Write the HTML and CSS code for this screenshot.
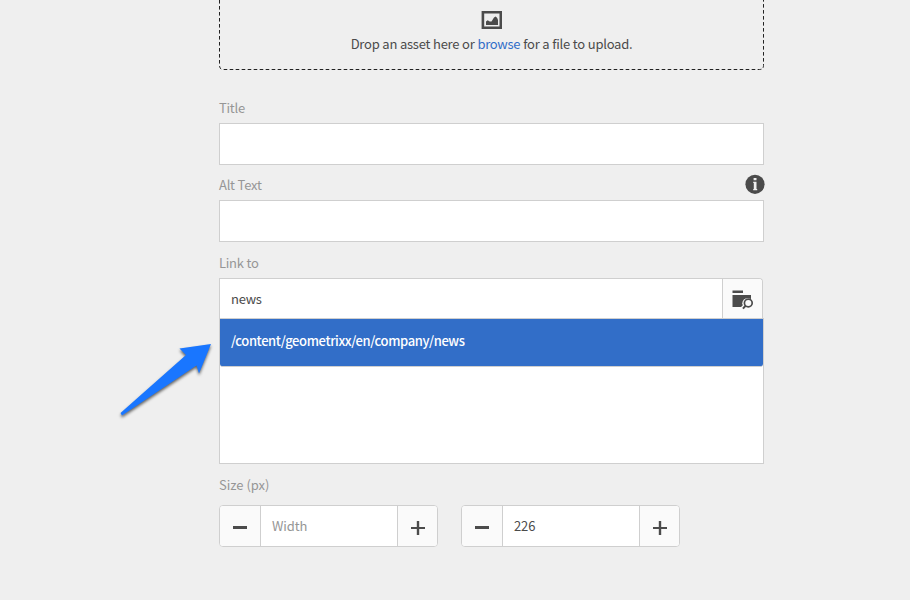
FILE: index.html
```
<!DOCTYPE html>
<html lang="en">
<head>
<meta charset="utf-8">
<title>Image</title>
<link rel="stylesheet" href="styles.css">
</head>
<body>
<form class="form">
  <div class="dropzone">
    <svg class="outline" width="545" height="70" viewBox="0 0 545 70"><path d="M.5 0V65.500Q.5 69.500 4.500 69.500H540.500Q544.500 69.500 544.500 65.500V0" fill="none" stroke="#222" stroke-dasharray="3.600 2.400" stroke-dashoffset="0"/></svg>
    <svg class="asset-icon" width="22" height="18" viewBox="0 0 22 18"><path fill="#4b4b4b" fill-rule="evenodd" d="M.6 0H21v18H.6zM3.200 2.500v13h15.300v-13z"/><path fill="#4b4b4b" d="M5 14V10.500l1.700-1.300 2 1.300h1.800L13 6.500l1.700-1 1.500 1.500.8 2v5z"/></svg>
    <p class="drop-text">Drop an asset here or <a class="browse">browse</a> for a file to upload.</p>
  </div>
  <label class="label title-label">Title</label>
  <div class="input"></div>
  <div class="label-row">
    <label class="label">Alt Text</label>
    <svg class="info" width="20" height="20" viewBox="0 0 20 20"><circle cx="10" cy="10.300" r="9.600" fill="#4b4b4b"/><path fill="#efefef" d="M8.600 4h2.900v2.300H8.600zM8.200 7.700h3.300v7.200h.7v1.300H8.200v-1.300h.6V9h-.6z"/></svg>
  </div>
  <div class="input"></div>
  <label class="label link-label">Link to</label>
  <div class="path">
    <div class="path-value"><span>news</span></div>
    <div class="path-button"><svg width="22" height="20" viewBox="0 0 22 20"><path fill="#4b4b4b" d="M.5.500h10.500v2.500H.5zM.5 5H19v12H.5z"/><circle cx="15.700" cy="13.300" r="5.400" fill="#fafafa"/><path d="M13.500 15.500l-4 4" stroke="#fafafa" stroke-width="4"/><circle cx="16.300" cy="13" r="3.900" fill="#fafafa" stroke="#4b4b4b" stroke-width="1.700"/><path d="M13.600 15.700l-2.700 2.900" stroke="#4b4b4b" stroke-width="2"/></svg></div>
  </div>
  <div class="list">
    <div class="option"><span>/content/geometrixx/en/company/news</span></div>
    <svg class="pointer" width="110" height="90" viewBox="0 0 110 90"><path fill="#1976ff" d="M5.500 72L71 14 64.500 7.500l31.500-4.500-12 29.500-2.500-8L7 74.500z"/></svg>
  </div>
  <label class="label size-label">Size (px)</label>
  <div class="sizes">
    <div class="spinner">
      <div class="step"><svg width="14" height="14" viewBox="0 0 14 14"><path fill="#4b4b4b" d="M0 5h14v3H0z"/></svg></div>
      <div class="amount placeholder"><span>Width</span></div>
      <div class="step plus"><svg width="14" height="14" viewBox="0 0 14 14"><path fill="#4b4b4b" d="M0 6h5.800V0h2.400v6H14v2H8.200v6H5.800V8H0z"/></svg></div>
    </div>
    <div class="spinner">
      <div class="step"><svg width="14" height="14" viewBox="0 0 14 14"><path fill="#4b4b4b" d="M0 5h14v3H0z"/></svg></div>
      <div class="amount"><span>226</span></div>
      <div class="step plus"><svg width="14" height="14" viewBox="0 0 14 14"><path fill="#4b4b4b" d="M0 6h5.800V0h2.400v6H14v2H8.200v6H5.800V8H0z"/></svg></div>
    </div>
  </div>
</form>
</body>
</html>
```
FILE: styles.css
```
* { box-sizing: border-box; }
body {
  margin: 0;
  height: 600px;
  overflow: hidden;
  background: #efefef;
  color: #4b4b4b;
  font: 13px/20px "Noto Sans CJK SC", "Open Sans", sans-serif;
  letter-spacing: -0.26px;
  word-spacing: 0.25px;
}
svg { display: block; }
.form { width: 545px; margin-left: 219px; }
.dropzone {
  position: relative;
  height: 70px;
  padding-top: 11px;
  text-align: center;
}
.outline { position: absolute; left: 0; top: 0; }
.asset-icon { margin: 0 auto; }
.drop-text { margin: 5px 0 0; }
.browse { color: #326ec8; }
.label { display: block; height: 20px; color: #969696; }
.title-label { margin: 28px 0 5px; }
.input { height: 42px; background: #fff; border: 1px solid #cfcfcf; }
.label-row { display: flex; justify-content: space-between; height: 35px; padding-top: 10px; }
.info { margin: -1px -1px 0 0; }
.link-label { margin: 11px 0 5px; }
.path { display: flex; width: 544px; height: 40px; border: 1px solid #cfcfcf; border-bottom: 0; border-radius: 0 4px 0 0; background: #fff; overflow: hidden; }
.path-value { flex: 1; padding: 10px 11px; }
.path-button { width: 40px; border-left: 1px solid #cfcfcf; background: #fafafa; padding: 11px 0 0 9px; }
.list { position: relative; height: 146px; border: 1px solid #cfcfcf; background: #fff; }
.option { height: 48px; padding: 12px 11px; background: #326ec8; border-bottom: 1px solid #cfcfcf; border-radius: 0 0 3px 3px; color: #fff; font-weight: 500; letter-spacing: -0.39px; }
.pointer { position: absolute; left: -105px; top: 22px; filter: drop-shadow(0 2px 1.500px rgba(0,0,0,.6)); }
.size-label { margin: 11px 0 10px; letter-spacing: -0.05px; }
.sizes { display: flex; gap: 23px; }
.spinner { display: flex; width: 219px; height: 42px; border: 1px solid #cfcfcf; border-radius: 4px; background: #fff; overflow: hidden; }
.step { display: flex; align-items: center; justify-content: center; width: 40px; background: #fafafa; padding-top: 3px; }
.plus { width: 39px; }
.amount { flex: 1; padding: 10px 11px; border: solid #cfcfcf; border-width: 0 1px; letter-spacing: -0.1px; }
.placeholder { color: #969696; }
```
